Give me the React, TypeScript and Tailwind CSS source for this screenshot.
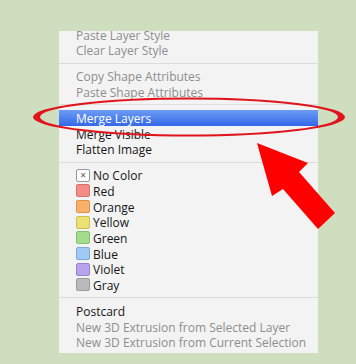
import React from 'react';

type Row =
  | {kind: 'item'; label: string; disabled?: boolean; selected?: boolean; swatch?: string; border?: string; none?: boolean}
  | {kind: 'sep'};

const rows: Row[] = [
  {kind: 'item', label: 'Paste Layer Style', disabled: true},
  {kind: 'item', label: 'Clear Layer Style', disabled: true},
  {kind: 'sep'},
  {kind: 'item', label: 'Copy Shape Attributes', disabled: true},
  {kind: 'item', label: 'Paste Shape Attributes', disabled: true},
  {kind: 'sep'},
  {kind: 'item', label: 'Merge Layers', selected: true},
  {kind: 'item', label: 'Merge Visible'},
  {kind: 'item', label: 'Flatten Image'},
  {kind: 'sep'},
  {kind: 'item', label: 'No Color', none: true},
  {kind: 'item', label: 'Red', swatch: '#f38b87', border: '#d9716d'},
  {kind: 'item', label: 'Orange', swatch: '#f8b06b', border: '#dc9249'},
  {kind: 'item', label: 'Yellow', swatch: '#ebe174', border: '#cbbf52'},
  {kind: 'item', label: 'Green', swatch: '#a2dc8c', border: '#82c06c'},
  {kind: 'item', label: 'Blue', swatch: '#a0c9f6', border: '#7ea9d9'},
  {kind: 'item', label: 'Violet', swatch: '#b7a2ec', border: '#9784cf'},
  {kind: 'item', label: 'Gray', swatch: '#bababa', border: '#9c9c9c'},
  {kind: 'sep'},
  {kind: 'item', label: 'Postcard'},
  {kind: 'item', label: 'New 3D Extrusion from Selected Layer', disabled: true},
  {kind: 'item', label: 'New 3D Extrusion from Current Selection', disabled: true},
];

function MenuRow({row}: {row: Row}) {
  if (row.kind === 'sep') {
    return (
      <div className="h-[10.3px] flex items-center">
        <div className="h-px w-full bg-[#dcdcdc]" />
      </div>
    );
  }
  const color = row.selected ? 'text-white' : row.disabled ? 'text-[#8e8e8e]' : 'text-[#161616]';
  return (
    <div
      className={`h-[15.7px] flex items-center pl-[17px] ${color} ${
        row.selected ? 'bg-gradient-to-b from-[#6d9cf4] to-[#3467e8]' : ''
      }`}>
      {row.none && (
        <span className="w-[14px] h-[13px] mr-[3px] rounded-[2px] border border-[#9a9a9a] bg-white flex items-center justify-center text-[10px] leading-none text-[#555]">
          ×
        </span>
      )}
      {row.swatch && (
        <span
          className="w-[14px] h-[13px] mr-[3px] rounded-[2px] border"
          style={{backgroundColor: row.swatch, borderColor: row.border}}
        />
      )}
      <span className="leading-[15.7px] translate-y-[1px]">{row.label}</span>
    </div>
  );
}

export default function App() {
  return (
    <div className="relative w-[356px] h-[364px] bg-[#cfdebf] overflow-hidden font-['Open_Sans',sans-serif] text-[12px]">
      <div className="pt-[31px] pl-[59px]">
        <div className="w-[259px] h-[322px] bg-[#f3f3f3] overflow-hidden">
          <div className="-mt-[4.4px]">
            {rows.map((r, i) => (
              <MenuRow key={i} row={r} />
            ))}
          </div>
        </div>
      </div>
      <svg className="absolute inset-0" width="356" height="364" viewBox="0 0 356 364">
        <path
          fillRule="evenodd"
          fill="#e0141a"
          d="M33 117 A156 19.5 0 1 0 345 117 A156 19.5 0 1 0 33 117 Z M40 117 A149 17.5 0 1 0 338 117 A149 17.5 0 1 0 40 117 Z"
        />
        <polygon fill="#ff0000" points="257,143 308,163 299,172 335,213 318,229 283,189 272,196" />
      </svg>
    </div>
  );
}
